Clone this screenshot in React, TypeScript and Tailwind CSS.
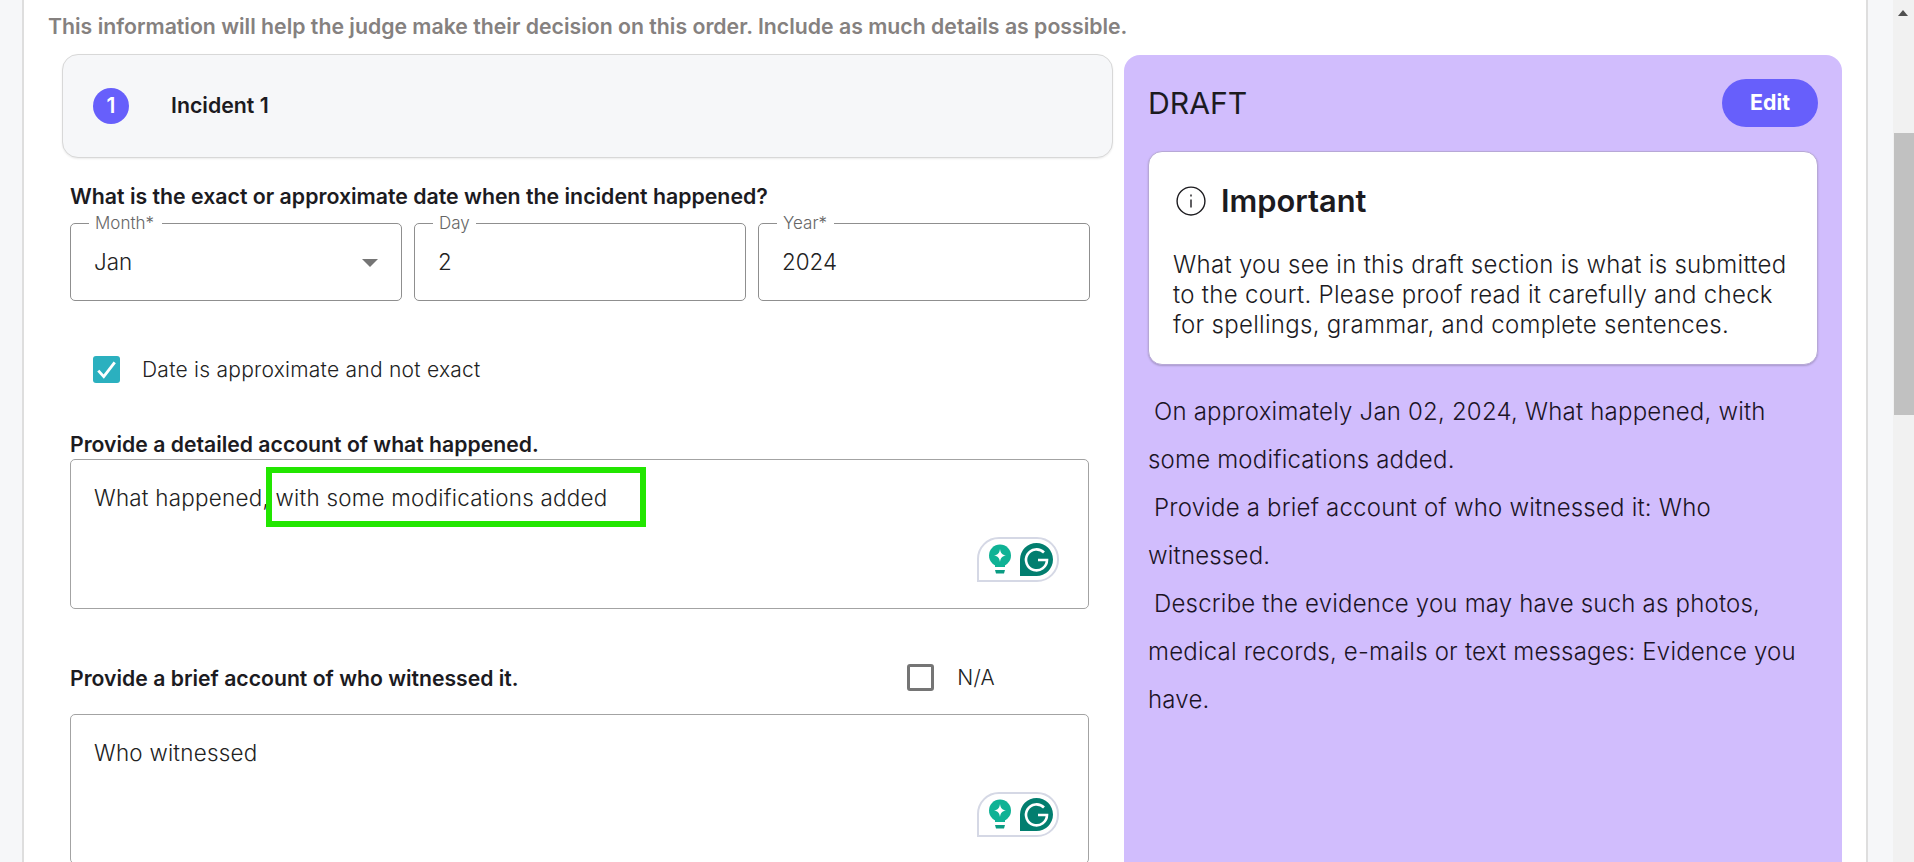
import React from 'react';

const GrammarlyBadge = () => (
    <div className="absolute left-[906px] top-[77px] flex h-[45px] w-[82px] items-center gap-[8px] rounded-[22px] rounded-bl-none border-2 border-[#d5d8e5] bg-white pl-[9px]">
        <svg width="24" height="32" viewBox="0 0 24 32">
            <circle cx="12" cy="11.5" r="11" fill="#0fb295" />
            <path d="M7 20h10v3H7z" fill="#0fb295" />
            <path d="M7 26h10l-1 3.5H8z" fill="#0a9c83" />
            <path d="M12 5c.7 4.300 2 5.700 6 6.500-4 .8-5.300 2.200-6 6.500-.7-4.300-2-5.700-6-6.500 4-.8 5.300-2.200 6-6.500z" fill="#fff" />
        </svg>
        <svg width="33" height="33" viewBox="0 0 33 33">
            <path d="M16.500 0a16.500 16.500 0 0 1 0 33H0V16.500A16.500 16.500 0 0 1 16.500 0z" fill="#027e6f" />
            <path d="M24 9.500a10.500 10.500 0 1 0 3 7.500h-9" fill="none" stroke="#fff" strokeWidth="2.600" />
        </svg>
    </div>
);

const DateField = ({ label, value, labelWidth, select }: { label: string; value: string; labelWidth: string; select?: boolean }) => (
    <div className="relative flex h-[78px] flex-1 items-center rounded-[5px] border border-[#8f8f8f] px-[23px] text-[22.4px] font-light text-[#222]">
        <span className={`absolute left-[18px] top-[-12px] bg-white px-[6px] text-[17px] font-light leading-[22px] text-[#666] ${labelWidth}`}>{label}</span>
        {value}
        {select && <span className="absolute right-[23px] top-[35px] h-0 w-0 border-x-[8px] border-t-[8px] border-x-transparent border-t-[#757575]" />}
    </div>
);

const TextBox = ({ value, children }: { value: string; children?: React.ReactNode }) => (
    <div className="relative h-[150px] w-[1019px] shrink-0 rounded-[5px] border border-[#a3a3a3] px-[23px] pt-[24px] text-[22.4px] font-light leading-[27px] tracking-[0.25px] text-[#222]">
        {value}
        {children}
        <GrammarlyBadge />
    </div>
);

const draftLines = [
    'On approximately Jan 02, 2024, What happened, with some modifications added.',
    'Provide a brief account of who witnessed it: Who witnessed.',
    'Describe the evidence you may have such as photos, medical records, e-mails or text messages: Evidence you have.',
];

export default function App() {
    return (
        <div className="flex h-screen overflow-hidden bg-[#f6f7f9] font-['Inter',sans-serif] text-[#1c1b1f]">
            <div className="flex min-w-0 flex-1 pl-[22px] pr-[25px]">
                <main className="flex-1 border-x-2 border-[#dedede] bg-white pl-[24px]">
                    <p className="pt-[14px] pb-[1px] text-[21.25px] font-semibold leading-[24px] text-[#85817f]">
                        This information will help the judge make their decision on this order. Include as much details as possible.
                    </p>
                    <div className="mt-[15px] flex gap-[11px] pl-[14px]">
                        <section className="w-[1051px] shrink-0">
                            <div className="flex h-[104px] items-center rounded-[16px] border border-[#d8d8d8] bg-[#f6f7f9] pl-[30px] shadow-[0_1px_2px_rgba(0,0,0,0.08)]">
                                <span className="flex h-[36px] w-[36px] items-center justify-center rounded-full bg-[#675ffb] text-[21px] font-semibold text-white">1</span>
                                <span className="ml-[42px] text-[21.3px] font-semibold text-[#1c1b1f]">Incident 1</span>
                            </div>
                            <div className="pl-[8px]">
                                <h3 className="mt-[26px] text-[21.3px] font-semibold leading-[24px]">What is the exact or approximate date when the incident happened?</h3>
                                <div className="mt-[15px] flex w-[1020px] gap-[12px]">
                                    <DateField label="Month*" value="Jan" labelWidth="w-[73px]" select />
                                    <DateField label="Day" value="2" labelWidth="w-[43px]" />
                                    <DateField label="Year*" value="2024" labelWidth="w-[57px]" />
                                </div>
                                <label className="mt-[55px] flex items-center pl-[23px] text-[21px] font-light leading-[27px] tracking-[0.25px] text-[#222]">
                                    <span className="flex h-[27px] w-[27px] items-center justify-center rounded-[3px] bg-[#2bb0bf]">
                                        <svg width="23" height="23" viewBox="0 0 21 21" fill="none" stroke="#fff" strokeWidth="2.600"><path d="M3 11.500l5 5.500L18 4" /></svg>
                                    </span>
                                    <span className="ml-[22px]">Date is approximate and not exact</span>
                                </label>
                                <h3 className="mt-[49px] text-[21.2px] font-semibold leading-[24px]">Provide a detailed account of what happened.</h3>
                                <div className="mt-[3px]">
                                    <TextBox value="What happened, with some modifications added">
                                        <div className="absolute left-[195px] top-[7px] h-[60px] w-[380px] border-[6px] border-[#22e600]" />
                                    </TextBox>
                                </div>
                                <div className="mt-[55px] flex items-center justify-between">
                                    <h3 className="text-[21.2px] font-semibold leading-[24px]">Provide a brief account of who witnessed it.</h3>
                                    <label className="mr-[118px] flex items-center text-[21px] font-light leading-[27px] tracking-[0.25px] text-[#222]">
                                        <span className="h-[27px] w-[27px] rounded-[3px] border-[3px] border-[#757575]" />
                                        <span className="ml-[23px]">N/A</span>
                                    </label>
                                </div>
                                <div className="mt-[23px]">
                                    <TextBox value="Who witnessed" />
                                </div>
                            </div>
                        </section>
                        <aside className="mt-px h-[900px] w-[718px] shrink-0 rounded-[16px] bg-[#d1bdfd] px-[24px] pt-[24px]">
                            <div className="flex items-center justify-between">
                                <h2 className="text-[30.200px] leading-[48px]">DRAFT</h2>
                                <button className="h-[48px] w-[96px] rounded-full bg-[#675ffb] text-[21.3px] font-bold text-white">Edit</button>
                            </div>
                            <div className="mt-[24px] h-[214px] rounded-[14px] border border-[#b7a8d6] bg-white pl-[24px] pt-[29px] shadow-[0_1px_2px_rgba(0,0,0,0.2)]">
                                <div className="flex items-center">
                                    <svg className="ml-[3px]" width="30" height="30" viewBox="0 0 28 28" fill="none" stroke="#1c1b1f" strokeWidth="1.300">
                                        <circle cx="14" cy="14" r="13" />
                                        <path d="M14 12.500V20M14 8v1.800" />
                                    </svg>
                                    <h3 className="ml-[15px] text-[30.800px] font-semibold leading-[40px]">Important</h3>
                                </div>
                                <p className="mt-[29px] w-[630px] text-[24px] font-light leading-[30px] tracking-[0.3px] text-[#1c1b1f]">
                                    What you see in this draft section is what is submitted to the court. Please proof read it carefully and check for spellings, grammar, and complete sentences.
                                </p>
                            </div>
                            <div className="mt-[23px] text-[24px] font-light leading-[48px] tracking-[0.2px] text-[#1c1426]">
                                {draftLines.map((line) => (
                                    <p key={line} className="indent-[6px]">{line}</p>
                                ))}
                            </div>
                        </aside>
                    </div>
                </main>
            </div>
            <div className="relative w-[21px] shrink-0 bg-[#f1f1f1]">
                <span className="absolute left-[5px] top-[10px] h-0 w-0 border-x-[5px] border-b-[6px] border-x-transparent border-b-[#505050]" />
                <div className="absolute left-[1px] top-[133px] h-[282px] w-[20px] bg-[#c1c1c1]" />
            </div>
        </div>
    );
}
